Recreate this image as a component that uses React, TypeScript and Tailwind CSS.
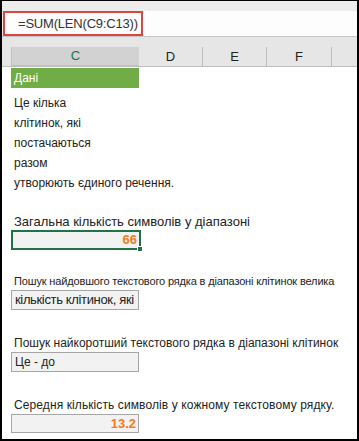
export default function App() {
  const rows = ['Це кілька', 'клітинок, які', 'постачаються', 'разом', 'утворюють єдиного речення.']

  return (
    <div className="w-[359px] h-[441px] bg-white border-x-2 border-t border-b-2 border-black overflow-hidden font-['Liberation_Sans',sans-serif] text-[#222]">
      {/* formula bar */}
      <div className="h-[10px] bg-[#ececec]" />
      <div className="h-[25px] bg-[#fdfdfd] flex">
        <div className="w-[1px] bg-[#ececec]" />
        <div className="w-[140px] h-[25px] border-2 border-[#e0443f] flex items-center pl-[13px] text-[13px] tracking-[-0.2px] text-[#333]">
          =SUM(LEN(C9:C13))
        </div>
      </div>
      <div className="h-[1px] bg-[#c6c6c6]" />
      <div className="h-[10px] bg-[#e6e6e6]" />

      {/* column headers */}
      <div className="h-[20px] flex bg-[#e6e6e6] text-[13px]">
        <div className="w-[9px] border-b border-[#c0c0c0]" />
        <div className="w-[128px] bg-[#d2d2d2] border-b-2 border-[#217346] flex items-center justify-center text-[#217346] border-l border-[#c0c0c0]">
          C
        </div>
        <div className="w-[64px] border-b border-r border-[#bdbdbd] flex items-center justify-center">D</div>
        <div className="w-[64px] border-b border-r border-[#bdbdbd] flex items-center justify-center">E</div>
        <div className="w-[65px] border-b border-r border-[#bdbdbd] flex items-center justify-center">F</div>
        <div className="flex-1 border-b border-[#bdbdbd]" />
      </div>

      {/* sheet */}
      <div className="pl-[9px] text-[12px]">
        <div className="w-[128px] h-[20px] bg-[#70ad47] text-white flex items-center pl-[3px] mt-[1px]">Дані</div>
        <div className="mt-[5px]">
          {rows.map((r) => (
            <div key={r} className="h-[20px] leading-[20px] pl-[3px] whitespace-nowrap">
              {r}
            </div>
          ))}
        </div>

        <div className="mt-[20px] h-[17px] leading-[17px] pl-[3px] text-[13px] whitespace-nowrap">
          Загальна кількість символів у діапазоні
        </div>
        <div className="relative w-[130px] h-[20px] bg-[#f2f2f2] border-2 border-[#217346] flex items-center justify-end pr-[2px] text-[13px] font-bold text-[#f47b20]">
          66
          <div className="absolute right-[-4px] bottom-[-4px] w-[6px] h-[6px] bg-[#217346] border border-white" />
        </div>

        <div className="mt-[22px] h-[18px] leading-[18px] pl-[3px] text-[11px] tracking-[-0.15px] whitespace-nowrap">
          Пошук найдовшого текстового рядка в діапазоні клітинок велика
        </div>
        <div className="w-[128px] h-[20px] bg-[#f2f2f2] border border-[#a6a6a6] flex items-center pl-[3px] text-[13px] tracking-[-0.35px] whitespace-nowrap overflow-hidden">
          кількість клітинок, які
        </div>

        <div className="mt-[25px] h-[17px] leading-[17px] pl-[3px] whitespace-nowrap">
          Пошук найкоротший текстового рядка в діапазоні клітинок
        </div>
        <div className="w-[128px] h-[20px] bg-[#f2f2f2] border border-[#a6a6a6] flex items-center pl-[3px]">
          Це - до
        </div>

        <div className="mt-[24px] h-[18px] leading-[18px] pl-[3px] tracking-[0.1px] whitespace-nowrap">
          Середня кількість символів у кожному текстовому рядку.
        </div>
        <div className="w-[128px] h-[19px] bg-[#f2f2f2] border border-[#a6a6a6] flex items-center justify-end pr-[2px] text-[13px] font-bold text-[#f47b20]">
          13.2
        </div>
      </div>
    </div>
  )
}
